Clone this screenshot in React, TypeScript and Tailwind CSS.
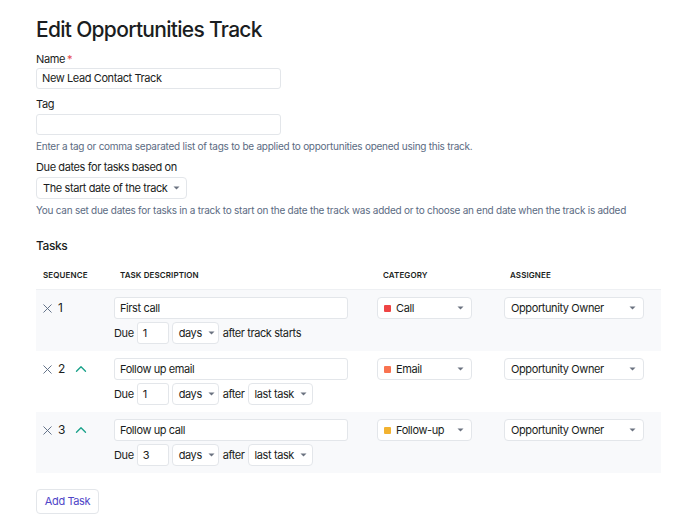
import { X, ChevronUp } from "lucide-react";

interface Task {
  seq: number;
  description: string;
  due: string;
  after: "start" | "last";
  category: string;
  color: string;
}

const tasks: Task[] = [
  { seq: 1, description: "First call", due: "1", after: "start", category: "Call", color: "bg-[#ef4444]" },
  { seq: 2, description: "Follow up email", due: "1", after: "last", category: "Email", color: "bg-[#f97350]" },
  { seq: 3, description: "Follow up call", due: "3", after: "last", category: "Follow-up", color: "bg-[#f2b230]" },
];

function Caret() {
  return (
    <svg width="7" height="4" viewBox="0 0 7 4" className="shrink-0 ml-auto">
      <path d="M0.5 0.5h6L3.5 3.5z" fill="#6b7280" />
    </svg>
  );
}

function SelectBox({ children, className = "" }: { children: React.ReactNode; className?: string }) {
  return (
    <div
      className={`flex shrink-0 items-center gap-[6px] whitespace-nowrap rounded border border-[#e3e6ea] bg-white pl-[6px] pr-[7px] h-[22px] ${className}`}
    >
      <span className="flex items-center gap-[5px]">{children}</span>
      <Caret />
    </div>
  );
}

export default function App() {
  return (
    <div className="min-h-[526px] bg-white px-[36px] pt-[16px] text-[11px] tracking-[-0.4px] text-[#1a1d21] font-['Inter',sans-serif]">
      <h1 className="text-[21px] leading-[28px] font-medium tracking-[-0.7px]">Edit Opportunities Track</h1>

      <div className="mt-[7px]">
        <label className="block leading-[16px]">
          Name<span className="text-[#e5484d] ml-[2px]">*</span>
        </label>
        <div className="mt-[1px] w-[245px] h-[21px] rounded-[3px] border border-[#e3e6ea] px-[5px] flex items-center">
          New Lead Contact Track
        </div>
      </div>

      <div className="mt-[7px]">
        <label className="block leading-[16px]">Tag</label>
        <div className="mt-[2px] w-[245px] h-[21px] rounded-[3px] border border-[#e3e6ea]" />
        <p className="mt-[4px] text-[10px] leading-[14px] tracking-[-0.25px] text-[#5b6b82]">
          Enter a tag or comma separated list of tags to be applied to opportunities opened using this track.
        </p>
      </div>

      <div className="mt-[6px]">
        <label className="block leading-[16px]">Due dates for tasks based on</label>
        <SelectBox className="mt-[2px] w-[151px] h-[21px]">The start date of the track</SelectBox>
        <p className="mt-[4px] text-[10px] leading-[14px] tracking-[-0.25px] text-[#5b6b82] whitespace-nowrap">
          You can set due dates for tasks in a track to start on the date the track was added or to choose an end date
          when the track is added
        </p>
      </div>

      <h2 className="mt-[20px] text-[12px] leading-[18px] font-medium">Tasks</h2>

      <div className="mt-[5px] w-[625px]">
        <div className="grid grid-cols-[77px_263px_127px_158px] h-[30px] items-center border-b border-[#eef0f3] text-[8px] font-semibold tracking-[0.1px] uppercase">
          <div className="pl-[7px]">Sequence</div>
          <div className="pl-[7px]">Task Description</div>
          <div className="pl-[7px]">Category</div>
          <div className="pl-[7px]">Assignee</div>
        </div>

        {tasks.map((task) => (
          <div
            key={task.seq}
            className={`grid grid-cols-[77px_263px_127px_158px] pt-[7px] pb-[7px] ${
              task.seq % 2 === 1 ? "bg-[#f8f9fb]" : "bg-white"
            }`}
          >
            <div className="flex items-center h-[22px] pl-[4px] gap-[3px]">
              <X className="h-[15px] w-[15px] text-[#5b6b82]" strokeWidth={1.5} />
              <span className="text-[12px]">{task.seq}</span>
              {task.seq > 1 && <ChevronUp className="ml-[4px] h-[18px] w-[18px] text-[#1aa28a]" strokeWidth={1.8} />}
            </div>

            <div className="pl-[1px]">
              <div className="w-[234px] h-[22px] rounded-[3px] border border-[#e3e6ea] bg-white px-[5px] flex items-center">
                {task.description}
              </div>
              <div className="mt-[3px] flex items-center gap-[3px]">
                <span>Due</span>
                <div className="w-[32px] h-[22px] rounded-[3px] border border-[#e3e6ea] bg-white px-[5px] flex items-center">
                  {task.due}
                </div>
                <SelectBox className="w-[47px]">days</SelectBox>
                {task.after === "start" ? (
                  <span className="ml-[1px]">after track starts</span>
                ) : (
                  <>
                    <span className="ml-[1px]">after</span>
                    <SelectBox className="w-[65px]">last task</SelectBox>
                  </>
                )}
              </div>
            </div>

            <div className="pl-[1px]">
              <SelectBox className="w-[95px]">
                <span className={`inline-block h-[7px] w-[7px] rounded-[1px] ${task.color}`} />
                {task.category}
              </SelectBox>
            </div>

            <div className="pl-[1px]">
              <SelectBox className="w-[140px]">Opportunity Owner</SelectBox>
            </div>
          </div>
        ))}
      </div>

      <button className="mt-[16px] h-[25px] w-[63px] rounded-[4px] border border-[#e3e6ea] bg-white text-[#4f46c8] text-[11px]">
        Add Task
      </button>
    </div>
  );
}
